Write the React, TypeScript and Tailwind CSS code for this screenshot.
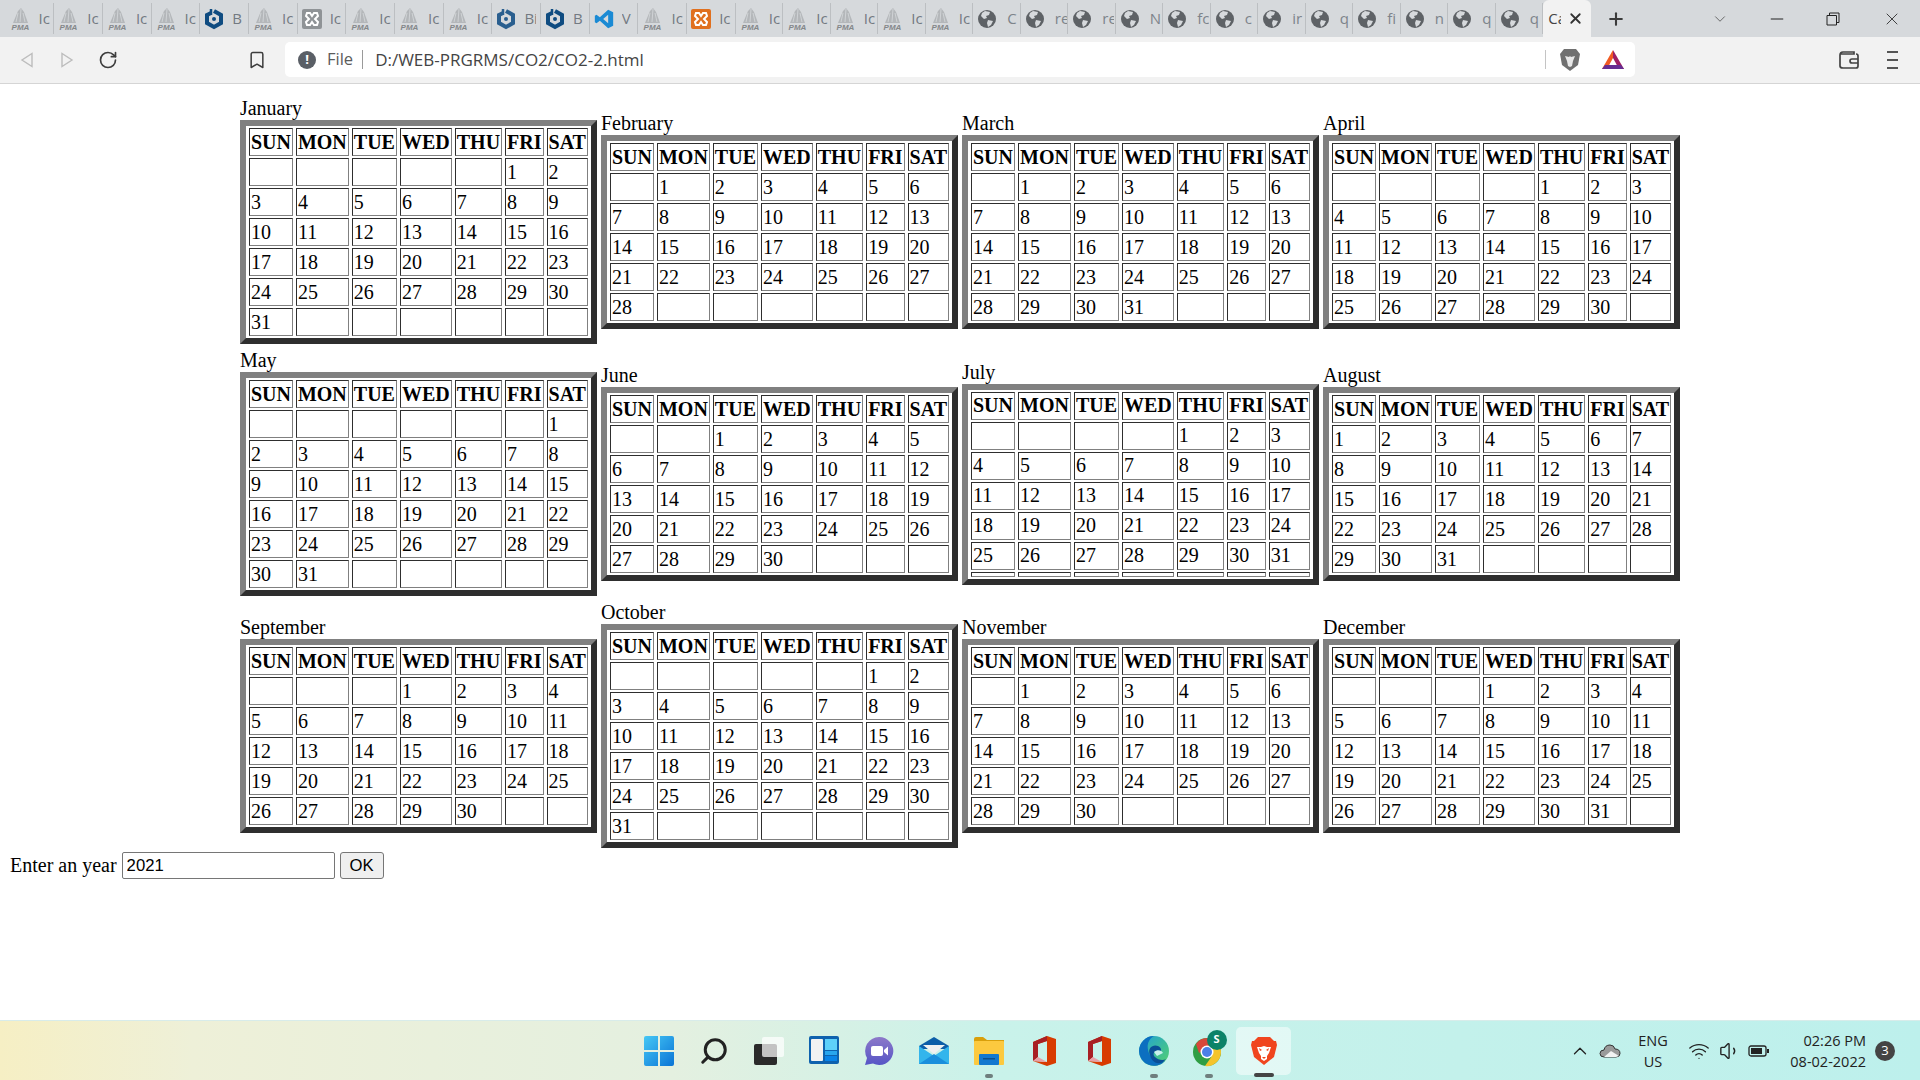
import { Bookmark, ChevronDown, ChevronUp, Minus, Plus, RotateCw, Search, Volume1, Wifi, X } from 'lucide-react'

const dayNames = ['SUN', 'MON', 'TUE', 'WED', 'THU', 'FRI', 'SAT']

const months = [
  { name: 'January', start: 5, days: 31 },
  { name: 'February', start: 1, days: 28 },
  { name: 'March', start: 1, days: 31 },
  { name: 'April', start: 4, days: 30 },
  { name: 'May', start: 6, days: 31 },
  { name: 'June', start: 2, days: 30 },
  { name: 'July', start: 4, days: 31 },
  { name: 'August', start: 0, days: 31 },
  { name: 'September', start: 3, days: 30 },
  { name: 'October', start: 5, days: 31 },
  { name: 'November', start: 1, days: 30 },
  { name: 'December', start: 3, days: 31 },
]

const cellBorder =
  'border border-solid border-t-[#2e2e2e] border-l-[#2e2e2e] border-r-[#808080] border-b-[#808080] px-[1px] py-[1.5px]'

function buildRows(start: number, days: number) {
  const cells: (number | null)[] = []
  for (let i = 0; i < start; i++) cells.push(null)
  for (let d = 1; d <= days; d++) cells.push(d)
  while (cells.length % 7 !== 0) cells.push(null)
  const rows: (number | null)[][] = []
  for (let i = 0; i < cells.length; i += 7) rows.push(cells.slice(i, i + 7))
  return rows
}

function MonthTable({ name, start, days }: { name: string; start: number; days: number }) {
  const rows = buildRows(start, days)
  // the month that ends right on a Saturday gets an empty extra row
  const extraRow = (start + days) % 7 === 0
  return (
    <table className="border-separate border-spacing-x-[3px] border-spacing-y-[2px] border-[6px] border-solid border-t-[#808080] border-l-[#808080] border-r-[#2e2e2e] border-b-[#2e2e2e]">
      <caption className="caption-top text-left">{name}</caption>
      <thead>
        <tr>
          {dayNames.map((d) => (
            <th key={d} className={`${cellBorder} font-bold text-center`}>{d}</th>
          ))}
        </tr>
      </thead>
      <tbody>
        {rows.map((row, i) => (
          <tr key={i}>
            {row.map((c, j) => (
              <td key={j} className={`${cellBorder} text-left`}>{c === null ? '\u00a0' : c}</td>
            ))}
          </tr>
        ))}
        {extraRow && (
          <tr>
            {dayNames.map((d) => (
              <td key={d} className={cellBorder}></td>
            ))}
          </tr>
        )}
      </tbody>
    </table>
  )
}

/* tab favicons */
function PmaIcon() {
  return (
    <svg width="21" height="22" viewBox="0 0 21 22" className="shrink-0">
      <path d="M11 0 L8 3 L3 15 L18 15 L14 4 Z" fill="#b4b7ba" />
      <path d="M11 1 L10 14 M8 5 L6 14 M13 5 L15 14" stroke="#d6d9dc" strokeWidth="0.8" />
      <text x="10.5" y="21.5" textAnchor="middle" fontSize="8" fontWeight="700" fontStyle="italic" fontFamily="Liberation Sans, sans-serif" fill="#84878a">PMA</text>
    </svg>
  )
}

function HexIcon({ color }: { color: string }) {
  return (
    <svg width="20" height="22" viewBox="0 0 20 22" className="shrink-0">
      <path d="M10 3 L17 7 V15 L10 19 L3 15 V7 L7 5" fill="none" stroke={color} strokeWidth="4" />
      <circle cx="10" cy="11" r="2" fill={color} />
      <path d="M7 1 V7" stroke={color} strokeWidth="2.5" />
    </svg>
  )
}

function XamppIcon({ color }: { color: string }) {
  return (
    <svg width="20" height="20" viewBox="0 0 20 20" className="shrink-0">
      <rect width="20" height="20" rx="2" fill={color} />
      <path d="M5 4 H8 L10 7 L12 4 H15 L16 7 L13 10 L16 13 L15 16 H12 L10 13 L8 16 H5 L4 13 L7 10 L4 7 Z" fill="none" stroke="#fff" strokeWidth="2" />
    </svg>
  )
}

function CodeIcon() {
  return (
    <svg width="20" height="20" viewBox="0 0 24 24" className="shrink-0">
      <path d="M17 1 L23 4 V20 L17 23 L7 14 L3 17 L1 16 V8 L3 7 L7 10 Z M17 7 L11 12 L17 17 Z" fill="#1a8ad4" fillRule="evenodd" />
    </svg>
  )
}

function GlobeIcon() {
  return (
    <svg width="18" height="18" viewBox="0 0 18 18" className="shrink-0">
      <circle cx="9" cy="9" r="9" fill="#5e6266" />
      <path d="M7 1 L12 2 L11 5 L8 6 L9 8 L6 9 L3 6 L4 3 Z M10 10 L15 11 L13 15 L10 17 L9 13 Z" fill="#d6d9dc" />
    </svg>
  )
}

type TabDef = { kind: string; label: string; color?: string }

const pma = (label = 'Ic'): TabDef => ({ kind: 'pma', label })

const tabs: TabDef[] = [
  pma(), pma(), pma(), pma(),
  { kind: 'hex', label: 'B', color: '#0f4c81' },
  pma(),
  { kind: 'xampp', label: 'Ic', color: '#8f9396' },
  pma(), pma(), pma(),
  { kind: 'hex', label: 'Bi', color: '#2a5f8f' },
  { kind: 'hex', label: 'B', color: '#0f4c81' },
  { kind: 'code', label: 'V' },
  pma(),
  { kind: 'xampp', label: 'Ic', color: '#e0701f' },
]

const narrowTabs: TabDef[] = [pma(), pma(), pma(), pma(), pma()]

const globeLabels = ['C', 're', 're', 'N', 'fc', 'c', 'ir', 'q', 'fi', 'n', 'q', 'q']

function TabIcon({ tab }: { tab: TabDef }) {
  if (tab.kind === 'pma') return <PmaIcon />
  if (tab.kind === 'hex') return <HexIcon color={tab.color!} />
  if (tab.kind === 'xampp') return <XamppIcon color={tab.color!} />
  if (tab.kind === 'code') return <CodeIcon />
  return <GlobeIcon />
}

function TabStrip() {
  return (
    <div className="h-[37px] bg-[#d6d9dc] flex items-center pl-[5.5px] font-['Open_Sans',sans-serif] shrink-0">
      {tabs.map((t, i) => (
        <div key={i} className="w-[48.7px] h-[31px] shrink-0 flex items-center gap-[8px] pl-[4px] border-r border-[#bcbfc2] overflow-hidden">
          <TabIcon tab={t} />
          <span className="text-[15px] text-[#737a82] w-[12px] overflow-hidden whitespace-nowrap">{t.label}</span>
        </div>
      ))}
      {narrowTabs.map((t, i) => (
        <div key={i} className="w-[47.5px] h-[31px] shrink-0 flex items-center gap-[8px] pl-[4px] border-r border-[#bcbfc2] overflow-hidden">
          <TabIcon tab={t} />
          <span className="text-[15px] text-[#737a82] w-[12px] overflow-hidden whitespace-nowrap">{t.label}</span>
        </div>
      ))}
      {globeLabels.map((l, i) => (
        <div key={i} className="w-[47.5px] h-[31px] shrink-0 flex items-center gap-[11px] pl-[5px] border-r border-[#bcbfc2] last:border-r-0 overflow-hidden">
          <GlobeIcon />
          <span className="text-[15px] text-[#7d848b] w-[12px] overflow-hidden whitespace-nowrap">{l}</span>
        </div>
      ))}
      <div className="w-[48px] h-[37px] shrink-0 bg-[#f2f2f2] rounded-t-[6px] flex items-center pl-[5px] gap-[6px]">
        <span className="text-[15px] text-[#444] w-[13px] overflow-hidden whitespace-nowrap">Ca</span>
        <X size={17} strokeWidth={2.5} className="text-[#333]" />
      </div>
      <Plus size={20} strokeWidth={2.5} className="ml-[15px] text-[#3b3b3b]" />
      <ChevronDown size={18} strokeWidth={1} className="ml-[85px] text-[#444]" />
      <Minus size={20} strokeWidth={1.2} className="ml-[38px] text-[#222]" />
      <svg width="14" height="14" viewBox="0 0 14 14" className="ml-[39px]">
        <path d="M1 3.5 H10.5 V13 H1 Z M3.5 3.5 V1 H13 V10.5 H10.5" fill="none" stroke="#222" strokeWidth="1" />
      </svg>
      <X size={20} strokeWidth={1} className="ml-[42px] text-[#222]" />
    </div>
  )
}

function Toolbar() {
  return (
    <div className="h-[47px] bg-[#f2f2f2] border-b border-[#d5d5d5] flex items-center pl-[15px] shrink-0 font-['Open_Sans',sans-serif]">
      <svg width="24" height="24" viewBox="0 0 24 24">
        <path d="M17 5.5 V18.5 L7 12 Z" fill="none" stroke="#bdbdbd" strokeWidth="1.4" />
      </svg>
      <svg width="24" height="24" viewBox="0 0 24 24" className="ml-[16px]">
        <path d="M7 5.5 V18.5 L17 12 Z" fill="none" stroke="#bdbdbd" strokeWidth="1.4" />
      </svg>
      <RotateCw size={20} strokeWidth={2} className="ml-[19px] text-[#3d3d3d]" />
      <Bookmark size={20} strokeWidth={1.8} className="ml-[129px] text-[#3d3d3d]" />
      <div className="ml-[18px] w-[1350px] h-[35px] bg-white rounded-[5px] flex items-center pl-[13px] mt-[-1px]">
        <div className="w-[18px] h-[18px] rounded-full bg-[#5a5f66] flex items-center justify-center text-white text-[13px] font-bold leading-none shrink-0">!</div>
        <span className="ml-[11px] text-[16.5px] text-[#5c5c5c]">File</span>
        <div className="ml-[9px] w-px h-[19px] bg-[#9a9a9a]" />
        <span className="ml-[12px] text-[17px] text-[#444]">D:/WEB-PRGRMS/CO2/CO2-2.html</span>
        <div className="ml-auto w-px h-[19px] bg-[#c4c4c4]" />
        <svg width="22" height="24" viewBox="0 0 22 24" className="ml-[13px]">
          <path d="M5 1 H17 L21 6 L19 17 L11 23 L3 17 L1 6 Z" fill="#707070" />
          <path d="M6 8 L10 9 L11 8 L12 9 L16 8 L14 13 L13 18 L11 19 L9 18 L8 13 Z" fill="#e8e8e8" />
        </svg>
        <svg width="24" height="22" viewBox="0 0 24 22" className="ml-[20px] mr-[10px]">
          <path d="M12 1 L1 20 L6 20 L12 9 Z" fill="#f15a22" />
          <path d="M12 1 L23 20 L18 20 L12 9 Z" fill="#9e1f63" />
          <path d="M1 20 L23 20 L20 16 L4 16 Z" fill="#662d91" />
        </svg>
      </div>
      <svg width="22" height="20" viewBox="0 0 22 20" className="ml-[203px]">
        <path d="M3 4 H16 V2 H5 Q2 2 2 5 V16 Q2 18 5 18 H18 Q20 18 20 16 V6 Q20 4 18 4" fill="none" stroke="#444" strokeWidth="1.7" />
        <path d="M20 9 H14 Q12 9 12 11 Q12 13 14 13 H20" fill="none" stroke="#444" strokeWidth="1.7" />
      </svg>
      <div className="ml-[27px] flex flex-col gap-[6px]">
        <div className="w-[11px] h-[2px] bg-[#555]" />
        <div className="w-[11px] h-[2px] bg-[#555]" />
        <div className="w-[11px] h-[2px] bg-[#555]" />
      </div>
    </div>
  )
}

/* taskbar icons */
function StartIcon() {
  return (
    <svg width="30" height="30" viewBox="0 0 30 30">
      <defs>
        <linearGradient id="win" x1="0" y1="0" x2="1" y2="1">
          <stop offset="0" stopColor="#46c8f5" />
          <stop offset="1" stopColor="#0a74d6" />
        </linearGradient>
      </defs>
      <path d="M2 0 H14 V14 H0 V2 Q0 0 2 0 Z M16 0 H28 Q30 0 30 2 V14 H16 Z M0 16 H14 V30 H2 Q0 30 0 28 Z M16 16 H30 V28 Q30 30 28 30 H16 Z" fill="url(#win)" />
    </svg>
  )
}

function TaskViewIcon() {
  return (
    <svg width="30" height="30" viewBox="0 0 30 30">
      <rect x="0" y="8" width="23" height="21" rx="2" fill="#2a2a2a" />
      <rect x="8" y="1" width="22" height="20" rx="2" fill="#ffffff" fillOpacity="0.72" />
    </svg>
  )
}

function WidgetsIcon() {
  return (
    <svg width="30" height="30" viewBox="0 0 30 30">
      <rect width="30" height="28" rx="2" fill="#0f62ae" />
      <rect x="2" y="3" width="12" height="22" rx="1" fill="#f2f2f2" />
      <rect x="16" y="3" width="12" height="11" fill="#5ed0fa" />
      <rect x="16" y="15" width="12" height="4" fill="#29a6ee" />
      <rect x="16" y="20" width="12" height="5" fill="#0a84e8" />
    </svg>
  )
}

function ChatIcon() {
  return (
    <svg width="30" height="30" viewBox="0 0 30 30">
      <defs>
        <linearGradient id="chat" x1="0" y1="0" x2="0" y2="1">
          <stop offset="0" stopColor="#8d79c9" />
          <stop offset="1" stopColor="#5655c6" />
        </linearGradient>
      </defs>
      <path d="M15 1 A14 14 0 1 1 9 27.5 L1 29 L3 22 A14 14 0 0 1 15 1 Z" fill="url(#chat)" />
      <rect x="7" y="10" width="12" height="10" rx="2" fill="#fff" />
      <path d="M20 14 L24 10.5 V19.5 L20 16 Z" fill="#fff" />
    </svg>
  )
}

function MailIcon() {
  return (
    <svg width="30" height="28" viewBox="0 0 30 28">
      <path d="M0 9 L15 0 L30 9 V12 H0 Z" fill="#0d5ea8" />
      <path d="M4 8 H26 L15 17 Z" fill="#f1f1f1" />
      <path d="M0 9 L15 19 L30 9 V27 H0 Z" fill="#33b5ec" />
      <path d="M0 27 L15 17 L30 27 Z" fill="#1a8fdc" />
    </svg>
  )
}

function FolderIcon() {
  return (
    <svg width="30" height="28" viewBox="0 0 30 28">
      <path d="M0 2 Q0 0 2 0 H9 L13 3 H30 V6 H0 Z" fill="#d99f0b" />
      <rect x="0" y="4" width="30" height="24" rx="1" fill="#fcc93f" />
      <rect x="5" y="17" width="20" height="11" rx="1" fill="#1278cf" />
      <rect x="9" y="21" width="12" height="1.5" fill="#0b4f8c" />
    </svg>
  )
}

function OfficeIcon() {
  return (
    <svg width="24" height="30" viewBox="0 0 24 30">
      <path d="M15 0 L24 3 V27 L15 30 L1 25 L15 26 V5 L6 8 V21 L1 25 V6 Z" fill="#d83b01" />
      <path d="M15 0 L1 6 V25 L6 21 V8 L15 5 Z" fill="#a81f24" />
      <path d="M15 26 L1 25 L6 21 Z" fill="#e8a0a8" />
    </svg>
  )
}

function EdgeIcon() {
  return (
    <svg width="30" height="30" viewBox="0 0 30 30">
      <defs>
        <linearGradient id="edge1" x1="0" y1="0" x2="1" y2="1">
          <stop offset="0" stopColor="#1f9fd8" />
          <stop offset="1" stopColor="#54d26c" />
        </linearGradient>
      </defs>
      <circle cx="15" cy="15" r="15" fill="url(#edge1)" />
      <path d="M0 15 A15 15 0 0 1 15 0 C8 4 7 12 11 19 C14 25 21 27 26 25 A15 15 0 0 1 0 15 Z" fill="#0c6fc0" />
      <path d="M11 19 C8 12 14 8 19 10 C23 12 23 16 20 17 C15 14 13 18 16 21 C19 24 24 25 27 23 C22 30 13 28 11 19 Z" fill="#0a4f96" />
      <path d="M15 16 C18 13 23 14 24 17 L18 20 Z" fill="#c8f1ec" />
    </svg>
  )
}

function ChromeIcon() {
  return (
    <div className="relative w-[30px] h-[30px]">
      <svg width="30" height="30" viewBox="0 0 30 30" className="absolute left-[-2px] top-[1px]">
        <circle cx="15" cy="15" r="14" fill="#2f9e44" />
        <path d="M15 1 A14 14 0 0 1 28 10 H15 L7 16 L4 7 A14 14 0 0 1 15 1 Z" fill="#d9483b" />
        <path d="M28 10 A14 14 0 0 1 13 29 L20 19 L15 10 Z" fill="#f5c42c" />
        <circle cx="15" cy="15" r="6.5" fill="#fff" />
        <circle cx="15" cy="15" r="5" fill="#4a7fe8" />
      </svg>
      <div className="absolute left-[13px] top-[-6px] w-[20px] h-[20px] rounded-full bg-[#0c8268] text-white text-[11px] font-bold flex items-center justify-center">S</div>
    </div>
  )
}

function BraveIcon() {
  return (
    <svg width="26" height="30" viewBox="0 0 26 30">
      <path d="M7 1 H19 L23 5 L25 5 L26 9 L23 21 L13 29 L3 21 L0 9 L1 5 L3 5 Z" fill="#f0451e" />
      <path d="M6 11 L10 11 L13 10 L16 11 L20 11 L18 17 L16 20 L16 23 L13 25 L10 23 L10 20 L8 17 Z" fill="#fff" />
      <path d="M8 12 L11 14 L9 15 Z M18 12 L15 14 L17 15 Z M11 21 H15 L13 23 Z" fill="#f0451e" />
    </svg>
  )
}

const taskbarApps = [
  { id: 'start', icon: <StartIcon /> },
  { id: 'search', icon: <Search size={30} strokeWidth={2.4} className="text-[#222] -scale-x-100" /> },
  { id: 'taskview', icon: <TaskViewIcon /> },
  { id: 'widgets', icon: <WidgetsIcon /> },
  { id: 'chat', icon: <ChatIcon /> },
  { id: 'mail', icon: <MailIcon /> },
  { id: 'folder', icon: <FolderIcon />, dot: true },
  { id: 'office', icon: <OfficeIcon /> },
  { id: 'office2', icon: <OfficeIcon /> },
  { id: 'edge', icon: <EdgeIcon />, dot: true },
  { id: 'chrome', icon: <ChromeIcon />, dot: true },
  { id: 'brave', icon: <BraveIcon />, active: true },
]

function Taskbar() {
  return (
    <div className="h-[60px] shrink-0 flex items-center pl-[631px] bg-[linear-gradient(90deg,#f6efc4_0%,#eef0d8_10%,#e4f0e0_35%,#c9f2ea_52%,#bdf0ec_100%)] border-t border-[#d8ecea] font-['Open_Sans',sans-serif]">
      {taskbarApps.map((a) => (
        <div key={a.id} className={`relative w-[55px] h-[48px] flex items-center justify-center rounded-[5px] ${a.active ? 'bg-white/50' : ''}`}>
          {a.icon}
          {a.dot && <div className="absolute bottom-[-3px] left-1/2 -translate-x-1/2 w-[8px] h-[4px] rounded-full bg-[#6f7f7e]" />}
          {a.active && <div className="absolute bottom-[-2px] left-1/2 -translate-x-1/2 w-[20px] h-[4px] rounded-full bg-[#444]" />}
        </div>
      ))}
      <ChevronUp size={22} strokeWidth={1.4} className="ml-[278px] text-[#222]" />
      <svg width="22" height="14" viewBox="0 0 22 14" className="ml-[8px]">
        <path d="M5 13 Q1 13 1 9.5 Q1 6 5 6 Q6 1 11 1 Q15 1 16 5 Q21 5 21 9.5 Q21 13 17 13 Z" fill="#9a9a9a" stroke="#333" strokeWidth="1" />
        <path d="M5 13 L12 7 L20 12 L17 13 Z" fill="#f2f2f2" />
      </svg>
      <div className="ml-[17px] w-[30px] text-[14.5px] leading-[21px] text-[#222] text-center">
        <div>ENG</div>
        <div>US</div>
      </div>
      <Wifi size={22} strokeWidth={1.5} className="ml-[20px] text-[#222]" />
      <Volume1 size={22} strokeWidth={1.5} className="ml-[9px] text-[#222]" />
      <svg width="22" height="12" viewBox="0 0 22 12" className="ml-[7px]">
        <rect x="1" y="1" width="17" height="10" rx="2" fill="none" stroke="#222" strokeWidth="1.3" />
        <rect x="3" y="3" width="11" height="6" fill="#222" />
        <rect x="19" y="4" width="2" height="4" fill="#222" />
      </svg>
      <div className="ml-[18px] w-[78px] text-[14.5px] leading-[21px] text-[#222] text-right whitespace-nowrap">
        <div>02:26 PM</div>
        <div>08-02-2022</div>
      </div>
      <div className="ml-[9px] w-[20px] h-[20px] rounded-full bg-[#444] text-white text-[13px] flex items-center justify-center">3</div>
    </div>
  )
}

export default function App() {
  const yearRows = [months.slice(0, 4), months.slice(4, 8), months.slice(8, 12)]
  return (
    <div className="h-[1080px] overflow-hidden flex flex-col bg-white">
      <TabStrip />
      <Toolbar />
      <main className="flex-1 pt-[13px] font-['Liberation_Serif',serif] text-[20px] leading-[23px] text-black">
        <div className="flex flex-col gap-y-[5px]">
          {yearRows.map((row) => (
            <div key={row[0].name} className="flex justify-center items-center gap-x-[4px]">
              {row.map((m) => (
                <MonthTable key={m.name} name={m.name} start={m.start} days={m.days} />
              ))}
            </div>
          ))}
        </div>
        <div className="flex items-center pl-[10px] mt-[4px]">
          <span>Enter an year</span>
          <input
            defaultValue="2021"
            className="ml-[5px] w-[213px] h-[27px] border border-[#767676] rounded-[2px] px-[4px] font-['Liberation_Sans',sans-serif] text-[16.7px] outline-none"
          />
          <button className="ml-[5px] w-[44px] h-[27px] border border-[#767676] rounded-[3px] bg-[#efefef] font-['Liberation_Sans',sans-serif] text-[16.7px]">OK</button>
        </div>
      </main>
      <Taskbar />
    </div>
  )
}
